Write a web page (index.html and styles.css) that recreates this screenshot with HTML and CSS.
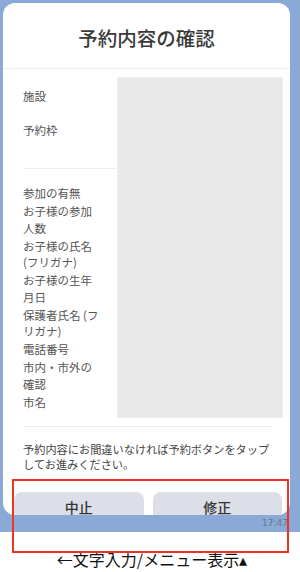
FILE: index.html
```html
<!DOCTYPE html>
<html lang="ja">
    <head>
        <meta charset="UTF-8" />
        <meta name="viewport" content="width=device-width, initial-scale=1.0" />
        <title>予約内容の確認</title>
        <link rel="stylesheet" href="styles.css">
    </head>

    <body>
        <div class="screen">
            <div class="card">
                <div class="card-head">
                    <h1>予約内容の確認</h1>
                </div>

                <div class="detail">
                    <div class="labels">
                        <div class="group group-top">
                            <div class="row">施設</div>
                            <div class="row">予約枠</div>
                        </div>
                        <div class="group group-list">
                            <div class="label">参加の有無</div>
                            <div class="label">お子様の参加人数</div>
                            <div class="label">お子様の氏名 (フリガナ)</div>
                            <div class="label">お子様の生年月日</div>
                            <div class="label">保護者氏名 (フリガナ)</div>
                            <div class="label">電話番号</div>
                            <div class="label">市内・市外の確認</div>
                            <div class="label">市名</div>
                        </div>
                    </div>
                    <div class="value-box"></div>
                </div>

                <p class="note">予約内容にお間違いなければ予約ボタンをタップしてお進みください。</p>

                <div class="actions">
                    <button class="btn">中止</button>
                    <button class="btn">修正</button>
                </div>
            </div>
            <div class="time">17:47</div>
        </div>

        <div class="hint">←文字入力/メニュー表示▴</div>

        <div class="highlight"></div>
    </body>
</html>
```

FILE: styles.css
```css
body {
    margin: 0;
    background: #fff;
    font-family: 'Noto Sans CJK JP', 'Noto Sans', sans-serif;
    color: #333;
    overflow: hidden;
}

.screen {
    background: #8aa9d6;
    padding: 3px 10px 0 3px;
}

.card {
    background: #fff;
    border-radius: 12px;
    height: 512px;
    overflow: hidden;
}

.card-head {
    height: 62px;
    padding-top: 3px;
    display: flex;
    align-items: center;
    justify-content: center;
    border-bottom: 1px solid #eee;
}

.card-head h1 {
    margin: 0;
    font-size: 19.5px;
    font-weight: 500;
    color: #3a3a3a;
}

.detail {
    display: flex;
    padding: 8px 7px 0 20px;
}

.labels {
    width: 94px;
    flex: none;
    font-size: 11.5px;
    color: #555;
}

.group-top {
    padding: 2px 0 21px;
    border-bottom: 1px solid #eee;
}

.row {
    height: 34px;
    line-height: 34px;
}

.group-list {
    padding: 16px 14px 6px 0;
}

.label {
    line-height: 16.5px;
    margin-bottom: 1.5px;
}

.value-box {
    flex: 1;
    background: #e9e9e9;
    border: 1px solid #eeeeee;
}

.note {
    margin: 8px 18px 0 20px;
    padding-top: 15px;
    border-top: 1px solid #eee;
    font-size: 11.2px;
    line-height: 15px;
    color: #444;
}

.actions {
    display: flex;
    gap: 9px;
    margin-top: 20px;
    padding: 0 8px 0 11px;
}

.btn {
    flex: 1;
    height: 30px;
    padding: 0;
    border: none;
    border-radius: 8px;
    background: #dcdfe7;
    font-family: inherit;
    font-size: 14px;
    line-height: 30px;
    font-weight: 500;
    color: #333;
}

.time {
    height: 17px;
    line-height: 17px;
    text-align: right;
    padding-right: 2px;
    font-size: 9px;
    color: #67778e;
    font-family: 'DejaVu Sans', sans-serif;
}

.hint {
    padding-top: 15px;
    padding-left: 4px;
    text-align: center;
    font-size: 16px;
    line-height: 24px;
    color: #111;
}

.highlight {
    position: absolute;
    left: 12px;
    top: 479px;
    width: 273px;
    height: 70px;
    border: 2px solid #ee3322;
}
```
